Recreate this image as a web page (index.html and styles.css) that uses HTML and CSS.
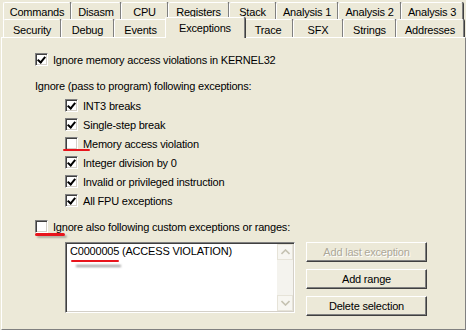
FILE: index.html
```html
<!DOCTYPE html>
<html lang="en">
<head>
    <meta charset="UTF-8">
    <title>Options - Exceptions</title>
    <link rel="stylesheet" href="styles.css">
</head>
<body>

<div class="dialog">
    <div class="tabs">
        <div class="tab-row row-top">
            <div class="tab">Commands</div>
            <div class="tab">Disasm</div>
            <div class="tab">CPU</div>
            <div class="tab">Registers</div>
            <div class="tab">Stack</div>
            <div class="tab">Analysis 1</div>
            <div class="tab">Analysis 2</div>
            <div class="tab">Analysis 3</div>
        </div>
        <div class="tab-row row-bottom">
            <div class="tab">Security</div>
            <div class="tab">Debug</div>
            <div class="tab">Events</div>
            <div class="tab active">Exceptions</div>
            <div class="tab">Trace</div>
            <div class="tab">SFX</div>
            <div class="tab">Strings</div>
            <div class="tab">Addresses</div>
        </div>
    </div>

    <div class="panel">
        <label class="check first">
            <span class="box checked"></span>
            <span>Ignore memory access violations in KERNEL32</span>
        </label>

        <div class="caption">Ignore (pass to program) following exceptions:</div>

        <div class="sub-list">
            <label class="check"><span class="box checked"></span><span>INT3 breaks</span></label>
            <label class="check"><span class="box checked"></span><span>Single-step break</span></label>
            <label class="check">
                <span class="box"></span><span>Memory access violation</span>
                <span class="mark mark-memory"></span>
            </label>
            <label class="check"><span class="box checked"></span><span>Integer division by 0</span></label>
            <label class="check"><span class="box checked"></span><span>Invalid or privileged instruction</span></label>
            <label class="check"><span class="box checked"></span><span>All FPU exceptions</span></label>
        </div>

        <label class="check custom">
            <span class="box"></span>
            <span>Ignore also following custom exceptions or ranges:</span>
            <span class="mark mark-custom"></span>
        </label>

        <div class="custom-area">
            <div class="listbox">
                <div class="list-items">
                    <div class="list-item">C0000005 (ACCESS VIOLATION)
                        <span class="mark mark-code"></span>
                        <span class="mark-shadow"></span>
                    </div>
                </div>
                <div class="scrollbar">
                    <div class="scroll-btn">
                        <svg width="9" height="6" viewBox="0 0 9 6"><path d="M0.5 5 L4.5 1 L8.5 5" fill="none" stroke="#c5c2b2" stroke-width="1.6"/></svg>
                    </div>
                    <div class="scroll-track"></div>
                    <div class="scroll-btn">
                        <svg width="9" height="6" viewBox="0 0 9 6"><path d="M0.5 1 L4.5 5 L8.5 1" fill="none" stroke="#c5c2b2" stroke-width="1.6"/></svg>
                    </div>
                </div>
            </div>
            <div class="buttons">
                <button class="button" disabled>Add last exception</button>
                <button class="button">Add range</button>
                <button class="button">Delete selection</button>
            </div>
        </div>
    </div>
</div>

</body>
</html>
```

FILE: styles.css
```css
body {
    margin: 0;
    background-color: #ece9d8;
    font-family: 'Liberation Sans', Arial, sans-serif;
    font-size: 11px;
    letter-spacing: -0.2px;
    color: #000;
}

.dialog {
    width: 466px;
    height: 330px;
    display: flex;
    flex-direction: column;
}

/* tabs */

.tabs {
    padding: 2px 0 0 3px;
}

.tab-row {
    display: grid;
    height: 17px;
}

.row-top {
    grid-template-columns: 68px 50px 47px 61px 47px 62px 63px 62px;
}

.row-bottom {
    grid-template-columns: 58px 53px 53px 76px 50px 50px 53px 68px;
    height: 18px;
}

.tab {
    border-top: 1px solid #fff;
    border-left: 1px solid #fff;
    border-right: 1px solid #808080;
    box-shadow: 1px 0 0 #404040;
    border-radius: 2px 2px 0 0;
    text-align: center;
    line-height: 16px;
    padding-top: 1px;
    background-color: #ece9d8;
}

.row-bottom .tab {
    padding-top: 3px;
    line-height: 14px;
}

.tab.active {
    position: relative;
    z-index: 1;
    margin: -2px -2px -1px -2px;
    padding-top: 2px;
    line-height: 16px;
}

/* panel */

.panel {
    flex: 1;
    margin-left: 1px;
    border-top: 1px solid #fff;
    border-left: 1px solid #fff;
    border-right: 1px solid #808080;
    border-bottom: 1px solid #808080;
    box-shadow: 1px 1px 0 #404040;
    padding: 12px 0 0 33px;
    display: flex;
    flex-direction: column;
}

.check {
    position: relative;
    display: flex;
    align-items: center;
    gap: 5px;
    height: 19px;
}

.box {
    width: 13px;
    height: 13px;
    box-sizing: border-box;
    background-color: #fff;
    border-top: 1px solid #808080;
    border-left: 1px solid #808080;
    border-right: 1px solid #fff;
    border-bottom: 1px solid #fff;
    box-shadow: inset 1px 1px 0 #404040, inset -1px -1px 0 #d4d0c8;
    position: relative;
    flex-shrink: 0;
}

.box.checked::after {
    content: '';
    position: absolute;
    left: 2px;
    top: 1px;
    width: 3px;
    height: 6px;
    border-right: 2px solid #000;
    border-bottom: 2px solid #000;
    transform: translate(1px, 0) rotate(40deg);
}

.caption {
    margin-top: 11px;
    line-height: 13px;
}

.sub-list {
    margin-top: 3px;
    padding-left: 30px;
}

.custom {
    margin-top: 7px;
}

/* hand-drawn red marks */

.mark {
    position: absolute;
    height: 2px;
    background-color: #e8141c;
    border-radius: 2px;
}

.mark-memory {
    left: -2px;
    top: 15px;
    width: 27px;
}

.mark-custom {
    left: 0;
    top: 16px;
    width: 30px;
    height: 3px;
    box-shadow: 2px 2px 2px rgba(0, 0, 0, 0.25);
}

.mark-code {
    left: 1px;
    top: 15px;
    width: 48px;
}

.mark-shadow {
    position: absolute;
    left: 6px;
    top: 20px;
    width: 45px;
    height: 2px;
    background-color: #9a9a9a;
    filter: blur(1px);
}

/* listbox + buttons */

.custom-area {
    display: flex;
    gap: 11px;
    margin-top: 6px;
    padding-left: 30px;
}

.listbox {
    width: 230px;
    height: 71px;
    box-sizing: border-box;
    display: flex;
    background-color: #fff;
    border-top: 1px solid #808080;
    border-left: 1px solid #808080;
    border-right: 1px solid #fff;
    border-bottom: 1px solid #fff;
    box-shadow: inset 1px 1px 0 #404040, inset -1px -1px 0 #d4d0c8;
    padding: 1px;
}

.list-items {
    flex: 1;
    padding: 1px 0 0 3px;
}

.list-item {
    position: relative;
    line-height: 13px;
}

.scrollbar {
    width: 16px;
    display: flex;
    flex-direction: column;
    background-color: #f4f3ee;
}

.scroll-btn {
    height: 16px;
    display: flex;
    align-items: center;
    justify-content: center;
    background-color: #f7f6f1;
    border: 1px solid #e6e3d8;
    box-sizing: border-box;
}

.scroll-track {
    flex: 1;
}

.buttons {
    display: flex;
    flex-direction: column;
    gap: 7px;
}

.button {
    width: 121px;
    height: 20px;
    background-color: #ece9d8;
    font-family: inherit;
    font-size: 11px;
    letter-spacing: inherit;
    color: #000;
    padding: 0;
    border-top: 1px solid #fff;
    border-left: 1px solid #fff;
    border-right: 1px solid #404040;
    border-bottom: 1px solid #404040;
    box-shadow: inset -1px -1px 0 #808080;
}

.button:disabled {
    color: #aca899;
    text-shadow: 1px 1px 0 #fff;
}
```
